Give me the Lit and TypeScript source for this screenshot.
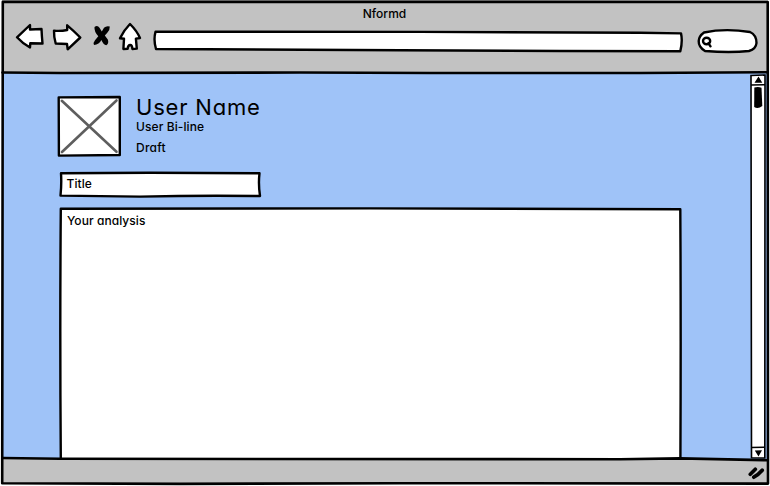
import { LitElement, html, svg, css } from "lit";
import { customElement } from "lit/decorators.js";

const base = css`
  * { box-sizing: border-box; }
  svg { display: block; overflow: visible; flex: none; }
  .ink { fill: none; stroke: #000; stroke-width: 2.4; stroke-linejoin: round; stroke-linecap: round; }
  .paper { fill: #fff; }
  .solid { fill: #000; stroke: none; }
`;

@customElement("browser-bar")
class BrowserBar extends LitElement {
  static styles = [base, css`
    :host { display: flex; flex-direction: column; height: 72px; padding-top: 5px; background: #c2c2c2; }
    .title { height: 17px; line-height: 17px; text-align: center; font-size: 12px; letter-spacing: 0; padding-right: 1px; }
    .tools { display: flex; height: 34px; align-items: flex-start; padding-left: 13px; }
    .back { margin-right: 8px; }
    .forward { margin-right: 11px; }
    .stop { margin-right: 8px; }
    .home { margin-right: 11px; }
    .address { margin-right: 14px; }
  `];
  render() {
    return html`
      <div class="title">Nformd</div>
      <div class="tools">
        <svg class="back" width="29" height="34" viewBox="15 22 29 34">
          <path class="ink paper" d="M17 37.3 L30 25 L30 29.5 Q36 29 41.5 29 Q41.8 36 42.5 43.5 L30.3 43.2 L30 47.5 Q22 43 17 37.3Z" />
        </svg>
        <svg class="forward" width="29" height="34" viewBox="52 22 29 34">
          <path class="ink paper" d="M54 30.6 Q60 31.4 67.2 30 L67.2 25.3 Q74 31 80.3 37.5 L67.7 49.3 L67 44 Q61 43.5 55.7 43.5 Q53.8 37 54 30.6Z" />
        </svg>
        <svg class="stop" width="17" height="34" viewBox="92 22 17 34">
          <path class="solid" d="M94.5 27 Q97.5 24.8 99.5 27.8 L101.8 31.5 L104 27.8 Q106.3 25.5 109.8 26.5 Q110 30 107.3 32.8 L104.8 35.5 L107.8 39.6 Q109.2 43.5 106.3 45.3 Q103.3 44.7 101.4 40 Q99.2 44.4 94 45 Q93 42.5 95 40.3 L98.3 36.3 Q94 31.5 94.5 27Z" />
        </svg>
        <svg class="home" width="25" height="34" viewBox="117 22 25 34">
          <path class="ink paper" d="M120 38.3 Q124 30 130 24 Q137 31 140 38 L135.9 38.6 L136.8 48.6 L132.4 49 Q132.2 45 130.2 45 Q128 45 127.6 48.8 L123.4 49 L124 38.7Z" />
        </svg>
        <svg class="address" width="530" height="34" viewBox="153 22 530 34">
          <path class="ink paper" d="M155.5 31.7 L420 31.9 L640 32.8 L681 33.4 Q682.8 41 680.3 51.3 L560 51 L400 50.2 L156 49 Q153.3 40 155.5 31.7Z" />
        </svg>
        <svg width="60" height="34" viewBox="697 22 60 34">
          <path class="ink paper" d="M704 32.5 Q725 28 750 32 Q756.5 35 756.5 43 Q756 49 749 51 Q730 53 705 51 Q698.5 47 698.7 41 Q699 36 704 32.5Z" />
          <ellipse class="ink" cx="706.6" cy="41" rx="3.6" ry="3.2" />
          <path class="ink" d="M708.5 43.3 L710.5 46.3" />
        </svg>
      </div>
    `;
  }
}

@customElement("post-editor")
class PostEditor extends LitElement {
  static styles = [base, css`
    :host { flex: 1; display: flex; flex-direction: column; padding: 23px 0 0 55px; min-width: 0; }
    .profile { display: flex; gap: 15px; height: 76px; }
    .cross { fill: none; stroke: #5e5e5e; stroke-width: 2.6; stroke-linecap: round; }
    .who { display: flex; flex-direction: column; white-space: nowrap; }
    .name { font-size: 22px; line-height: 24px; letter-spacing: 0.8px; font-weight: 400; }
    .line { font-size: 12px; line-height: 15px; letter-spacing: 0.1px; }
    .state { padding-top: 6px; letter-spacing: 0.25px; }
    .field { display: grid; font-size: 12px; line-height: 16px; letter-spacing: 0.06px; margin-left: 1px; }
    .field > * { grid-area: 1 / 1; }
    .field > .text { padding: 5px 0 0 8.5px; }
    .title { height: 36px; }
    .body { height: 252px; }
    .body > .text { padding-left: 9px; padding-top: 6px; }
  `];
  render() {
    return html`
      <div class="profile">
        <svg width="64" height="62" viewBox="57 95 64 62">
          <path class="ink paper" d="M58.7 97.4 L119.8 97 L119.8 155 L58.9 155.6Z" />
          <path class="cross" d="M61.8 100.8 L116.5 151.8 M116.5 100.5 L62 152" />
        </svg>
        <div class="who">
          <div class="name">User Name</div>
          <div class="line">User Bi-line</div>
          <div class="line state">Draft</div>
        </div>
      </div>
      <div class="field title">
        <svg width="204" height="28" viewBox="58 171 204 28">
          <path class="ink paper" d="M61 173.3 L150 172.8 L259.5 173.3 Q258.2 184 260 196 Q200 195.2 140 196.6 L60.5 195.6 Q61.7 184 61 173.3Z" />
        </svg>
        <div class="text">Title</div>
      </div>
      <div class="field body">
        <svg width="624" height="252" viewBox="58 207 624 252">
          <path class="ink paper" d="M60.8 459 Q59.8 330 60.8 208.7 L370 208.4 L680.3 209.2 Q681 330 680.4 459" />
        </svg>
        <div class="text">Your analysis</div>
      </div>
    `;
  }
}

@customElement("scroll-bar")
class ScrollBar extends LitElement {
  static styles = [base, css`
    :host { display: block; width: 20px; }
    .edge { fill: #fff; stroke: #000; stroke-width: 1.6; }
    .rule { fill: none; stroke: #000; stroke-width: 1.5; }
  `];
  render() {
    return html`
      <svg width="20" height="387" viewBox="750 72 20 387">
        <path class="edge" d="M751 75.5 L765 75 L764.8 458 L751.5 457.8Z" />
        <path class="rule" d="M751 85 L765 84.8 M751 447.5 L765 447.2" />
        <path class="solid" d="M758.5 76.5 L762.3 82.8 L754.5 82.8Z M754.8 450.5 L762 450.2 L758.5 456.6Z" />
        <path class="solid" d="M754.3 87.5 Q758 86.3 761.5 87.7 L762.3 106 Q758 109.3 754.2 107Z" />
      </svg>
    `;
  }
}

@customElement("app-root")
class AppRoot extends LitElement {
  static styles = [base, css`
    :host { display: grid; width: 770px; height: 486px; overflow: hidden; background: #fff; color: #000;
      font-family: Inter, "Open Sans", sans-serif; font-feature-settings: "cv11", "ss03"; font-weight: 450; }
    .window, .frame { grid-area: 1 / 1; }
    .window { display: flex; flex-direction: column; margin: 0 2px 2px 2px; }
    .page { display: flex; height: 387px; background: #9fc3f8; }
    scroll-bar { margin-right: -2px; }
    .status { display: flex; flex: 1; justify-content: flex-end; background: #c2c2c2; padding: 6px 3px 0 0; }
    .frame { z-index: 1; pointer-events: none; }
    .frame .ink { stroke-width: 2.6; }
    .grip { stroke-width: 3.7; }
  `];
  render() {
    const edges = [
      "M2.8 1.8 L500 1.9 L767.7 2 Q767.2 240 768 483.6 L400 483.2 L180 483.9 L2.2 483.2 Q2 240 2.8 1.8Z",
      "M2.5 72.5 L60 73 L300 72.5 L430 73 L640 73 L767 72.2",
      "M2.5 458 L60 458.8 L620 459.2 L680 458.4 L767 460.2",
    ];
    return html`
      <div class="window">
        <browser-bar></browser-bar>
        <div class="page">
          <post-editor></post-editor>
          <scroll-bar></scroll-bar>
        </div>
        <div class="status">
          <svg width="18" height="16" viewBox="747 465 18 16">
            <path class="ink grip" d="M750.3 474.2 L755.3 469.3 M753.8 477.2 Q758 475 762.2 470.2" />
          </svg>
        </div>
      </div>
      <svg class="frame" width="770" height="486" viewBox="0 0 770 486">
        ${edges.map((d) => svg`<path class="ink" d=${d} />`)}
      </svg>
    `;
  }
}
